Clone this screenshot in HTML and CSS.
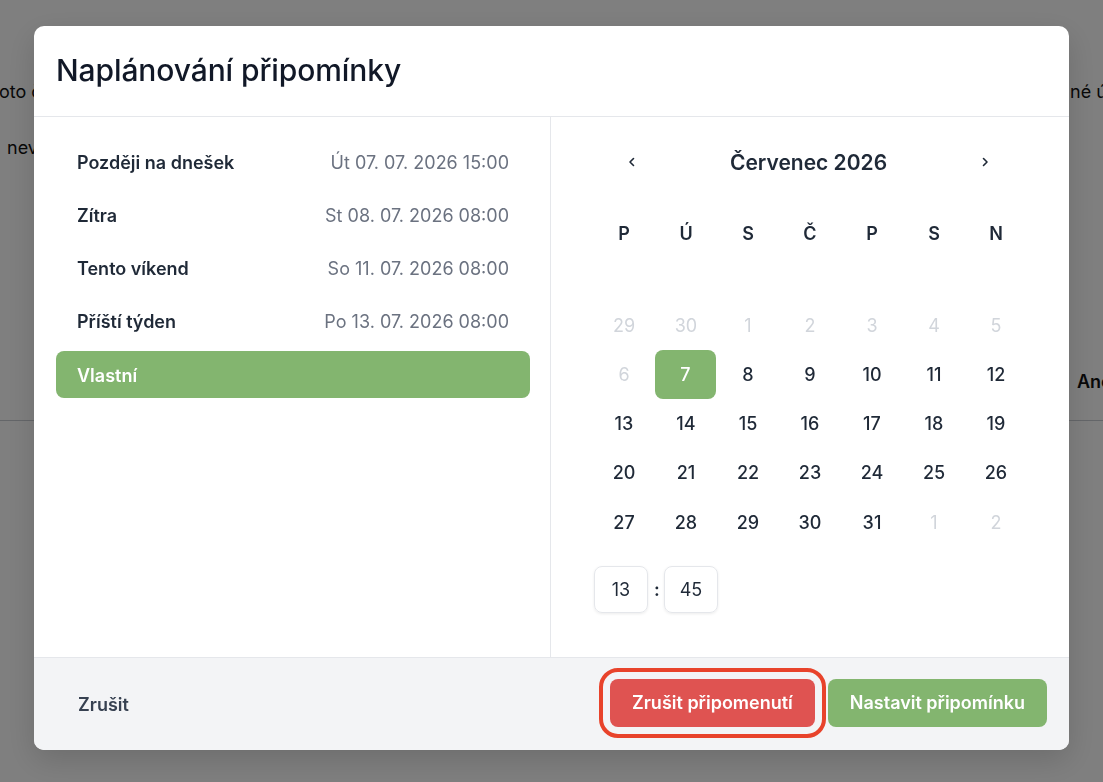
FILE: index.html
```html
<!DOCTYPE html>
<html lang="cs">
<head>
<meta charset="utf-8">
<title>Naplánování připomínky</title>
<link rel="stylesheet" href="styles.css">
</head>
<body>
<div class="bg-page">
  <div class="bg-line bg-line-1"><span class="bg-left">oto čtení</span><span class="bg-right">né úkoly</span></div>
  <div class="bg-line bg-line-2"><span class="bg-left2">nevidíte</span></div>
  <div class="bg-toolbar"><span class="bg-btn">Ano</span></div>
</div>
<div class="overlay">
  <div class="modal">
    <header class="modal-header"><h1 class="modal-title">Naplánování připomínky</h1></header>
    <div class="modal-body">
      <ul class="presets">
        <li class="preset"><span class="preset-label">Později na dnešek</span><span class="preset-date">Út 07. 07. 2026 15:00</span></li>
        <li class="preset"><span class="preset-label">Zítra</span><span class="preset-date">St 08. 07. 2026 08:00</span></li>
        <li class="preset"><span class="preset-label">Tento víkend</span><span class="preset-date">So 11. 07. 2026 08:00</span></li>
        <li class="preset"><span class="preset-label">Příští týden</span><span class="preset-date">Po 13. 07. 2026 08:00</span></li>
        <li class="preset active"><span class="preset-label">Vlastní</span></li>
      </ul>
      <div class="calendar">
        <div class="cal-inner">
          <div class="cal-head">
            <button class="cal-nav" aria-label="Předchozí měsíc"><svg width="12" height="12" viewBox="0 0 12 12"><path d="M7.5 2.5 4 6l3.5 3.5" fill="none" stroke="#1f2937" stroke-width="1.6" stroke-linecap="round" stroke-linejoin="round"/></svg></button>
            <span class="cal-title">Červenec 2026</span>
            <button class="cal-nav" aria-label="Další měsíc"><svg width="12" height="12" viewBox="0 0 12 12"><path d="M4.5 2.5 8 6 4.5 9.5" fill="none" stroke="#1f2937" stroke-width="1.6" stroke-linecap="round" stroke-linejoin="round"/></svg></button>
          </div>
          <div class="cal-weekdays">
            <span>P</span><span>Ú</span><span>S</span><span>Č</span><span>P</span><span>S</span><span>N</span>
          </div>
          <div class="cal-days">
            <span class="day muted">29</span><span class="day muted">30</span><span class="day muted">1</span><span class="day muted">2</span><span class="day muted">3</span><span class="day muted">4</span><span class="day muted">5</span>
            <span class="day muted">6</span><span class="day selected">7</span><span class="day">8</span><span class="day">9</span><span class="day">10</span><span class="day">11</span><span class="day">12</span>
            <span class="day">13</span><span class="day">14</span><span class="day">15</span><span class="day">16</span><span class="day">17</span><span class="day">18</span><span class="day">19</span>
            <span class="day">20</span><span class="day">21</span><span class="day">22</span><span class="day">23</span><span class="day">24</span><span class="day">25</span><span class="day">26</span>
            <span class="day">27</span><span class="day">28</span><span class="day">29</span><span class="day">30</span><span class="day">31</span><span class="day muted">1</span><span class="day muted">2</span>
          </div>
          <div class="time">
            <span class="time-box">13</span>
            <span class="time-sep">:</span>
            <span class="time-box">45</span>
          </div>
        </div>
      </div>
    </div>
    <footer class="modal-footer">
      <button class="btn btn-ghost">Zrušit</button>
      <div class="footer-actions">
        <button class="btn btn-danger">Zrušit připomenutí</button>
        <button class="btn btn-primary">Nastavit připomínku</button>
      </div>
    </footer>
  </div>
</div>
</body>
</html>
```

FILE: styles.css
```css
* { box-sizing: border-box; }

html, body {
  margin: 0;
  padding: 0;
  font-family: Inter, "Noto Sans", "Liberation Sans", sans-serif;
  color: #111827;
}

body {
  width: 1103px;
  height: 782px;
  overflow: hidden;
  background: #ffffff;
}

/* Background page (dimmed underneath) */
.bg-page {
  height: 782px;
  font-size: 18px;
  line-height: 24px;
  color: #111;
  white-space: nowrap;
  overflow: hidden;
}

.bg-line { display: flex; }

.bg-line-1 { padding-top: 80px; }

.bg-left {
  flex: 0 0 1071px;
  margin-left: -1px;
}

.bg-right { flex: 0 0 auto; }

.bg-line-2 {
  margin-top: 32px;
  padding-left: 7px;
}

.bg-toolbar {
  margin-top: 200px;
  height: 61px;
  border-bottom: 1px solid #c9cdd3;
  display: flex;
  justify-content: flex-start;
  padding-left: 1077px;
  padding-top: 10px;
}

.bg-btn { font-weight: 600; }

/* Overlay + modal */
.overlay {
  position: fixed;
  inset: 0;
  background: rgba(0, 0, 0, 0.5);
  display: flex;
  align-items: flex-start;
  padding: 26px 34px 0;
}

.modal {
  width: 100%;
  height: 724px;
  background: #ffffff;
  border-radius: 10px;
  box-shadow: 0 10px 30px rgba(0, 0, 0, 0.15);
  display: flex;
  flex-direction: column;
  overflow: hidden;
}

.modal-header {
  height: 91px;
  flex: 0 0 91px;
  border-bottom: 1px solid #e5e7eb;
  display: flex;
  align-items: center;
  padding: 0 22px;
}

.modal-title {
  margin: 0;
  font-size: 30px;
  font-weight: 500;
  color: #111827;
  letter-spacing: -0.1px;
  padding-bottom: 2px;
}

.modal-body {
  flex: 0 0 540px;
  display: grid;
  grid-template-columns: 517px 1fr;
}

/* Presets */
.presets {
  list-style: none;
  margin: 0;
  padding: 21px 20px 0 22px;
  border-right: 1px solid #e5e7eb;
  display: flex;
  flex-direction: column;
  gap: 6.25px;
}

.preset {
  height: 47px;
  display: flex;
  align-items: center;
  justify-content: space-between;
  padding: 1px 21px 0;
  border-radius: 8px;
  font-size: 18px;
}

.preset-label {
  font-weight: 600;
  color: #1f2937;
}

.preset-date {
  color: #6b7280;
  font-weight: 400;
}

.preset.active { background: #83b56f; }
.preset.active .preset-label { color: #ffffff; }

/* Calendar */
.calendar {
  padding-top: 21px;
}

.cal-inner {
  width: 434px;
  margin: 0 auto;
}

.cal-head {
  height: 48px;
  display: flex;
  align-items: center;
  justify-content: space-between;
  padding: 0 26px 0 23px;
}

.cal-nav {
  width: 32px;
  height: 32px;
  border: 0;
  background: transparent;
  padding: 0;
  display: flex;
  align-items: center;
  justify-content: center;
}

.cal-title {
  font-size: 21px;
  font-weight: 600;
  color: #1f2937;
}

.cal-weekdays {
  margin-top: 23px;
  display: grid;
  grid-template-columns: repeat(7, 62px);
  height: 49px;
  align-items: center;
  text-align: center;
  font-size: 18px;
  font-weight: 600;
  color: #1f2937;
}

.cal-days {
  margin-top: 42.5px;
  display: grid;
  grid-template-columns: repeat(7, 62px);
  grid-auto-rows: 49.25px;
}

.day {
  display: flex;
  align-items: center;
  justify-content: center;
  font-size: 18px;
  font-weight: 500;
  color: #1f2937;
  border-radius: 8px;
}

.day.muted { color: #d1d5db; font-weight: 400; }

.day.selected {
  background: #83b56f;
  color: #ffffff;
  margin: 0 1px 0 0;
}

.time {
  margin-top: 19px;
  margin-left: 1px;
  display: flex;
  align-items: center;
  gap: 6px;
}

.time-box {
  width: 54px;
  height: 47px;
  border: 1px solid #e5e7eb;
  border-radius: 8px;
  box-shadow: 0 1px 3px rgba(0, 0, 0, 0.08);
  display: flex;
  align-items: center;
  justify-content: center;
  font-size: 18px;
  color: #1f2937;
}

.time-sep {
  width: 4px;
  font-size: 18px;
  font-weight: 600;
  color: #1f2937;
  text-align: center;
}

/* Footer */
.modal-footer {
  flex: 1 1 auto;
  background: #f3f4f6;
  border-top: 1px solid #e5e7eb;
  display: flex;
  align-items: center;
  padding: 0 22px 3px;
}

.btn {
  font-family: inherit;
  font-size: 18px;
  font-weight: 600;
  height: 48px;
  padding: 0 22px;
  border: 0;
  border-radius: 8px;
  cursor: pointer;
}

.btn-ghost {
  background: transparent;
  color: #374151;
  margin-top: 4px;
}

.footer-actions {
  margin-left: auto;
  display: flex;
  gap: 13px;
}

.btn-danger {
  background: #df5351;
  color: #ffffff;
  outline: 4px solid #e8432b;
  outline-offset: 7px;
}

.btn-primary {
  background: #83b56f;
  color: #ffffff;
}
```
